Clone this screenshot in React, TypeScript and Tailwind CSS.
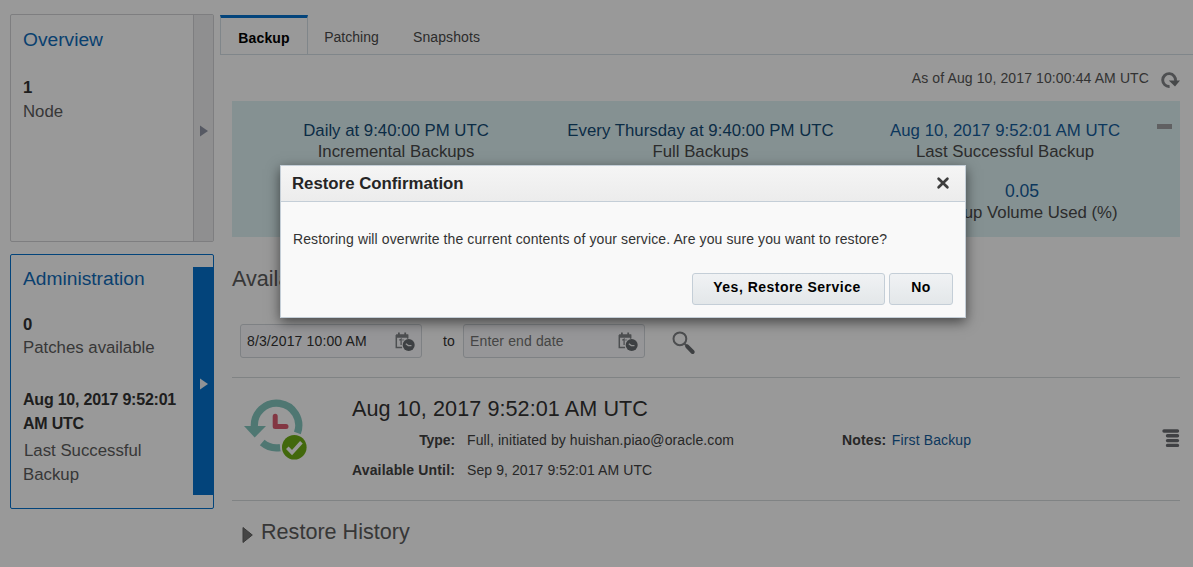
import type { ReactNode } from "react";

function SummaryCell({ value, label, className = "text-[#145c9b]" }: { value: string; label: string; className?: string }) {
  return (
    <div className="flex flex-col items-center text-[16.8px] leading-[21px] whitespace-nowrap">
      <span className={className}>{value}</span>
      <span className="text-[#4a4a4a]">{label}</span>
    </div>
  );
}

function SideCard({ title, active, children }: { title: string; active?: boolean; children: ReactNode }) {
  return (
    <section
      className={
        active
          ? "flex h-[255px] w-[204px] rounded-[2px] border border-[#0572ce] py-3"
          : "flex h-[228px] w-[204px] rounded-[2px] border border-[#d2d3d5]"
      }
    >
      <div className={active ? "w-[182px] shrink-0 pl-3" : "w-[182px] shrink-0 pt-[13px] pl-3"}>
        <h2 className="text-[19.2px] leading-6 text-[#0f6cba]">{title}</h2>
        {children}
      </div>
      <div
        className={
          active
            ? "flex h-[228px] w-[21px] shrink-0 items-center justify-center bg-[#0572ce]"
            : "flex w-5 shrink-0 items-center justify-center border-l border-[#d2d3d5] bg-[#efeff0]"
        }
      >
        <svg className={active ? "mt-1.5" : "mt-1.5 ml-px"} width="8" height="12" viewBox="0 0 8 12">
          <path d="M0 0.5 L8 6 L0 11.5Z" fill={active ? "#f4f6f8" : "#8f94a5"} />
        </svg>
      </div>
    </section>
  );
}

function DateIcon() {
  return (
    <svg className="mt-px" width="20" height="20" viewBox="0 0 20 20">
      <path d="M1.3 3.2h11.4v4.6M1.3 3v12.5h5.8" fill="none" stroke="#818488" strokeWidth="1.5" />
      <path d="M1 2.5h12v3.3H1zM3 .5h1.8v3H3zM9.3 .5h1.8v3H9.3z" fill="#818488" />
      <path d="M4.3 8.3 6.1 7.1v6M7.5 8h1" fill="none" stroke="#818488" strokeWidth="1.3" />
      <circle cx="13.7" cy="13" r="6.6" fill="#fafbfc" />
      <circle cx="13.7" cy="13.1" r="6" fill="#676b70" />
      <path d="M10.8 11.7 13.3 13.5 16.5 13.6" fill="none" stroke="#f2f3f4" strokeWidth="1.3" />
    </svg>
  );
}

function DateField({ text, className }: { text: string; className: string }) {
  return (
    <div className="flex h-[34px] w-[182px] items-center justify-between rounded-[3px] border border-[#d2d7dc] bg-[#fafbfd] pr-[6px] pl-[6px] text-[14px] tracking-[0.13px]">
      <span className={className}>{text}</span>
      <DateIcon />
    </div>
  );
}

function BackupIcon() {
  return (
    <svg width="66" height="64" viewBox="0 0 66 64">
      <path d="M10.4 28 A22.2 22.2 0 1 1 53.4 34" fill="none" stroke="#84c6bf" strokeWidth="7.2" />
      <path d="M18.2 43.6 A22.2 22.2 0 0 0 36.3 48.6" fill="none" stroke="#84c6bf" strokeWidth="7.2" />
      <path d="M0 27H22L10.7 38.6Z" fill="#84c6bf" />
      <path d="M31.2 17.3V27.5H42" fill="none" stroke="#db5c70" strokeWidth="5" strokeLinecap="round" strokeLinejoin="round" />
      <circle cx="50.3" cy="48.3" r="14" fill="#fff" />
      <circle cx="50.3" cy="48.3" r="12.3" fill="#6fae14" />
      <path d="M43.3 48.8 48 53.6 57.4 43.2" fill="none" stroke="#fff" strokeWidth="3.6" />
    </svg>
  );
}

function Sidebar() {
  return (
    <aside className="flex w-[204px] shrink-0 flex-col gap-3 pt-[14px] text-[16.8px] leading-6 text-[#5c5c5c]">
      <SideCard title="Overview">
        <p className="mt-6 font-bold text-[#333]">1</p>
        <p>Node</p>
      </SideCard>
      <SideCard title="Administration" active>
        <p className="mt-[22px] font-bold text-[#333]">0</p>
        <p className="-mt-px">Patches available</p>
        <p className="mt-7 text-[16px] font-bold tracking-[-0.22px] text-[#333]">Aug 10, 2017 9:52:01<br />AM UTC</p>
        <p className="mt-[3px] indent-px">Last Successful<br />Backup</p>
      </SideCard>
    </aside>
  );
}

function Tabs() {
  return (
    <nav className="flex h-[55px] items-end border-b border-[#d6dfe6] pt-[15px] text-[14px] text-[#4a4a4a]">
      <div className="flex h-[39px] w-[88px] items-center justify-center border-x border-t-[3px] border-x-[#d6dfe6] border-t-[#0572ce] pt-[5px] font-bold tracking-[0.15px] text-black">Backup</div>
      <div className="flex h-[34px] w-[87px] items-center justify-center">Patching</div>
      <div className="ml-[18px] flex h-[34px] items-center tracking-[0.1px]">Snapshots</div>
    </nav>
  );
}

function Summary() {
  return (
    <section className="flex h-[136px] w-[948px] bg-[#def2f4] pt-[19px] pl-3">
      <div className="w-[304px]">
        <SummaryCell value="Daily at 9:40:00 PM UTC" label="Incremental Backups" className="text-[#134a74]" />
      </div>
      <div className="w-[305px]">
        <SummaryCell value="Every Thursday at 9:40:00 PM UTC" label="Full Backups" className="tracking-[0.03px] text-[#134a74]" />
      </div>
      <div className="w-[304px]">
        <SummaryCell value="Aug 10, 2017 9:52:01 AM UTC" label="Last Successful Backup" className="tracking-[0.06px] text-[#145c9b]" />
        <div className="mt-[19px] pl-[34px]">
          <SummaryCell value="0.05" label="Backup Volume Used (%)" className="text-[17.6px] text-[#145c9b]" />
        </div>
      </div>
      <div className="mt-1 h-[5px] w-[15px] bg-[#a1a1a3]" />
    </section>
  );
}

function BackupRow() {
  return (
    <section className="flex h-[124px] w-[948px] border-y border-[#d6dadd] text-[14px] text-[#424242]">
      <div className="w-[120px] pt-[21px] pl-3">
        <BackupIcon />
      </div>
      <div className="w-[490px] pt-[19px]">
        <h3 className="text-[21.6px] leading-6 tracking-[0.07px] text-[#333]">Aug 10, 2017 9:52:01 AM UTC</h3>
        <div className="mt-1 grid grid-cols-[103px_1fr] gap-x-3 leading-[30px] tracking-[0.09px]">
          <b className="text-right tracking-[-0.1px] whitespace-nowrap">Type:</b>
          <span>Full, initiated by huishan.piao@oracle.com</span>
          <b className="text-right tracking-[0.15px] whitespace-nowrap">Available Until:</b>
          <span>Sep 9, 2017 9:52:01 AM UTC</span>
        </div>
      </div>
      <div className="flex-1 pt-[47px] leading-[30px] tracking-[0.13px]">
        <b className="mr-[5.5px]">Notes:</b>
        <span className="text-[#145c9b]">First Backup</span>
      </div>
      <svg className="mt-[51px]" width="18" height="19" viewBox="0 0 18 19">
        <path d="M2 2H15.5M5.5 6.7H15.5M5.5 11.6H15.5M5.5 16.4H15.5" stroke="#6b6d72" strokeWidth="3.4" strokeLinecap="round" />
      </svg>
    </section>
  );
}

function Dialog() {
  return (
    <div role="dialog" className="absolute top-[165px] left-[280px] flex h-[153px] w-[686px] flex-col border border-[#c4ced7] bg-[#f9f9f9] shadow-[0_4px_12px_rgba(0,0,0,0.55)]">
      <header className="flex h-9 shrink-0 items-center justify-between border-b border-[#c4ced7] bg-gradient-to-b from-[#f5f5f5] to-[#ececec] pr-[15px] pl-[11px]">
        <h2 className="text-[16.8px] font-bold text-[#252525]">Restore Confirmation</h2>
        <svg className="mb-px" width="14" height="14" viewBox="0 0 14 14">
          <path d="M2.6 2.8 11.4 11.2M11.4 2.8 2.6 11.2" stroke="#3d3d3d" strokeWidth="2.7" strokeLinecap="round" />
        </svg>
      </header>
      <p className="mt-[27px] pl-3 text-[14px] leading-5 tracking-[0.11px] whitespace-nowrap text-[#333]">
        Restoring will overwrite the current contents of your service. Are you sure you want to restore?
      </p>
      <div className="mt-6 flex justify-end gap-1 pr-3 text-[14px] font-bold tracking-[0.48px] text-black">
        <button className="h-8 w-[193px] rounded-[3px] border border-[#c4ced7] bg-gradient-to-b from-[#f0f2f4] to-[#e3e7e9] pr-[3px] pb-[3px]">Yes, Restore Service</button>
        <button className="h-8 w-16 rounded-[3px] border border-[#c4ced7] bg-gradient-to-b from-[#f0f2f4] to-[#e3e7e9] pb-[3px]">No</button>
      </div>
    </div>
  );
}

export default function App() {
  return (
    <div className="relative h-[567px] w-[1193px] overflow-hidden bg-white font-['Liberation_Sans',Arial,sans-serif]">
      <div className="flex gap-1.5 pl-[10px]">
        <Sidebar />
        <main className="min-w-0 flex-1">
          <Tabs />
          <div className="pl-3">
            <div className="flex h-[46px] items-center gap-3 pr-[13px] text-[14px] text-[#555]">
              <span className="ml-auto tracking-[0.11px]">As of Aug 10, 2017 10:00:44 AM UTC</span>
              <svg className="mt-1" width="19" height="16" viewBox="0 0 19 16">
                <path d="M8.6 14.4 A6.4 6.4 0 1 1 14.4 9" fill="none" stroke="#828487" strokeWidth="2.9" />
                <path d="M7.8 8.6H19L14 14.6Z" fill="#76787b" />
              </svg>
            </div>
            <Summary />
            <h2 className="mt-[30px] text-[21.6px] leading-6 text-[#5c5c5c]">Available Backups</h2>
            <div className="mt-[33px] flex h-[34px] items-center pl-2 text-[14px] text-[#333]">
              <DateField text="8/3/2017 10:00 AM" className="text-[#333]" />
              <span className="w-[41px] pl-[21px]">to</span>
              <DateField text="Enter end date" className="text-[#737373]" />
              <svg className="mt-[3px] ml-[27px]" width="24" height="24" viewBox="0 0 24 24">
                <circle cx="7.9" cy="7.8" r="6.4" fill="none" stroke="#808386" strokeWidth="2" />
                <path d="M12.3 12.5 15 15" stroke="#808386" strokeWidth="2" />
                <path d="M15.2 15.3 20.7 21" stroke="#686b6f" strokeWidth="4" strokeLinecap="round" />
              </svg>
            </div>
            <div className="mt-[19px]">
              <BackupRow />
            </div>
            <div className="mt-[19px] flex items-center pl-[10px] text-[21.6px] leading-6 text-[#5c5c5c]">
              <svg className="mt-1.5 mr-2" width="11" height="16" viewBox="0 0 11 16">
                <path d="M1 0.5 10.3 8 1 15.5Z" fill="#747474" stroke="#606060" strokeWidth="1" />
              </svg>
              <h2>Restore History</h2>
            </div>
          </div>
        </main>
      </div>
      <div className="absolute inset-0 bg-black/40" />
      <Dialog />
    </div>
  );
}
